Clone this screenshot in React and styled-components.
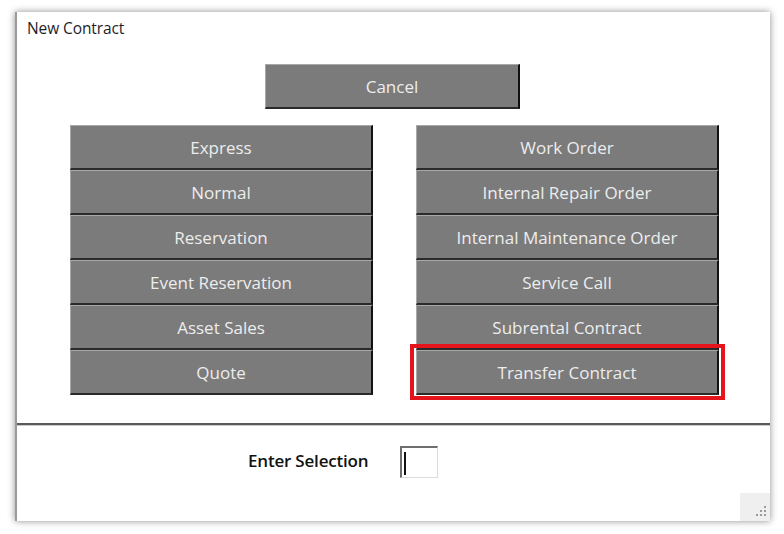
import styled, { createGlobalStyle } from "styled-components"

const Global = createGlobalStyle`
  html, body {
    margin: 0;
    background: #ffffff;
  }
`

const Page = styled.div`
  width: 784px;
  height: 534px;
  padding: 12px 0 0 15px;
  box-sizing: border-box;
  font-family: "Open Sans", "Noto Sans", sans-serif;
`

const Window = styled.div`
  position: relative;
  width: 755px;
  height: 509px;
  background: #ffffff;
  border-left: 2px solid #9a9a9a;
  box-sizing: border-box;
  box-shadow: 0 0 7px rgba(0, 0, 0, 0.45);
  display: flex;
  flex-direction: column;
`

const Title = styled.div`
  font-size: 15.5px;
  color: #1e1e2a;
  line-height: 20px;
  padding: 6px 0 0 10px;
  height: 26px;
  letter-spacing: -0.1px;
`

const CancelRow = styled.div`
  display: flex;
  justify-content: center;
  margin-top: 20px;
  padding-right: 2px;
`

const Grid = styled.div`
  display: grid;
  grid-template-columns: 303px 303px;
  grid-template-rows: repeat(6, 45px);
  grid-auto-flow: column;
  column-gap: 43px;
  margin-top: 16px;
  padding-left: 53px;
`

const Button = styled.div`
  position: relative;
  width: ${p => p.$width || "auto"};
  height: 45px;
  box-sizing: border-box;
  background: #7b7b7b;
  border-top: 1px solid #a8a8a8;
  border-left: 1px solid #a8a8a8;
  border-right: 2px solid #111111;
  border-bottom: 2px solid #2a2a2a;
  color: #ededed;
  font-size: 17px;
  display: flex;
  align-items: center;
  justify-content: center;

  ${p => p.$highlight && `
    &::after {
      content: "";
      position: absolute;
      left: -7px;
      right: -8px;
      top: -7px;
      bottom: -7px;
      border: 4px solid #e3141c;
    }
  `}
`

const Divider = styled.div`
  margin-top: 28px;
  height: 2px;
  background: #5a5a5a;
  border-bottom: 1px solid #c9c9c9;
`

const Footer = styled.div`
  flex: 1;
  display: flex;
  align-items: flex-start;
  gap: 32px;
  padding: 20px 0 0 231px;
`

const Label = styled.div`
  font-size: 17px;
  font-weight: 600;
  line-height: 30px;
  color: #111111;
  letter-spacing: -0.2px;
`

const Field = styled.div`
  width: 38px;
  height: 32px;
  box-sizing: border-box;
  border-top: 2px solid #6e6e6e;
  border-left: 2px solid #6e6e6e;
  border-right: 1px solid #dcdcdc;
  border-bottom: 1px solid #dcdcdc;
  background: #ffffff;
  padding: 4px 0 0 2px;
`

const Caret = styled.div`
  width: 2px;
  height: 23px;
  background: #111111;
`

const Grip = styled.div`
  position: absolute;
  right: 0;
  bottom: 0;
  width: 30px;
  height: 28px;
  background: #efefef;
  display: flex;
  align-items: flex-end;
  justify-content: flex-end;
  padding: 0 3px 3px 0;
  box-sizing: border-box;
`

const left = ["Express", "Normal", "Reservation", "Event Reservation", "Asset Sales", "Quote"]
const right = [
  "Work Order",
  "Internal Repair Order",
  "Internal Maintenance Order",
  "Service Call",
  "Subrental Contract",
  "Transfer Contract",
]

export default function App() {
  return (
    <Page>
      <Global />
      <Window>
        <Title>New Contract</Title>
        <CancelRow>
          <Button $width="255px">Cancel</Button>
        </CancelRow>
        <Grid>
          {left.map(t => (
            <Button key={t}>{t}</Button>
          ))}
          {right.map(t => (
            <Button key={t} $highlight={t === "Transfer Contract"}>{t}</Button>
          ))}
        </Grid>
        <Divider />
        <Footer>
          <Label>Enter Selection</Label>
          <Field>
            <Caret />
          </Field>
        </Footer>
        <Grip>
          <svg width="12" height="12" viewBox="0 0 12 12">
            <g fill="#9a9a9a">
              <rect x="9" y="0" width="2" height="2" />
              <rect x="5" y="4" width="2" height="2" />
              <rect x="9" y="4" width="2" height="2" />
              <rect x="1" y="8" width="2" height="2" />
              <rect x="5" y="8" width="2" height="2" />
              <rect x="9" y="8" width="2" height="2" />
            </g>
          </svg>
        </Grip>
      </Window>
    </Page>
  )
}
